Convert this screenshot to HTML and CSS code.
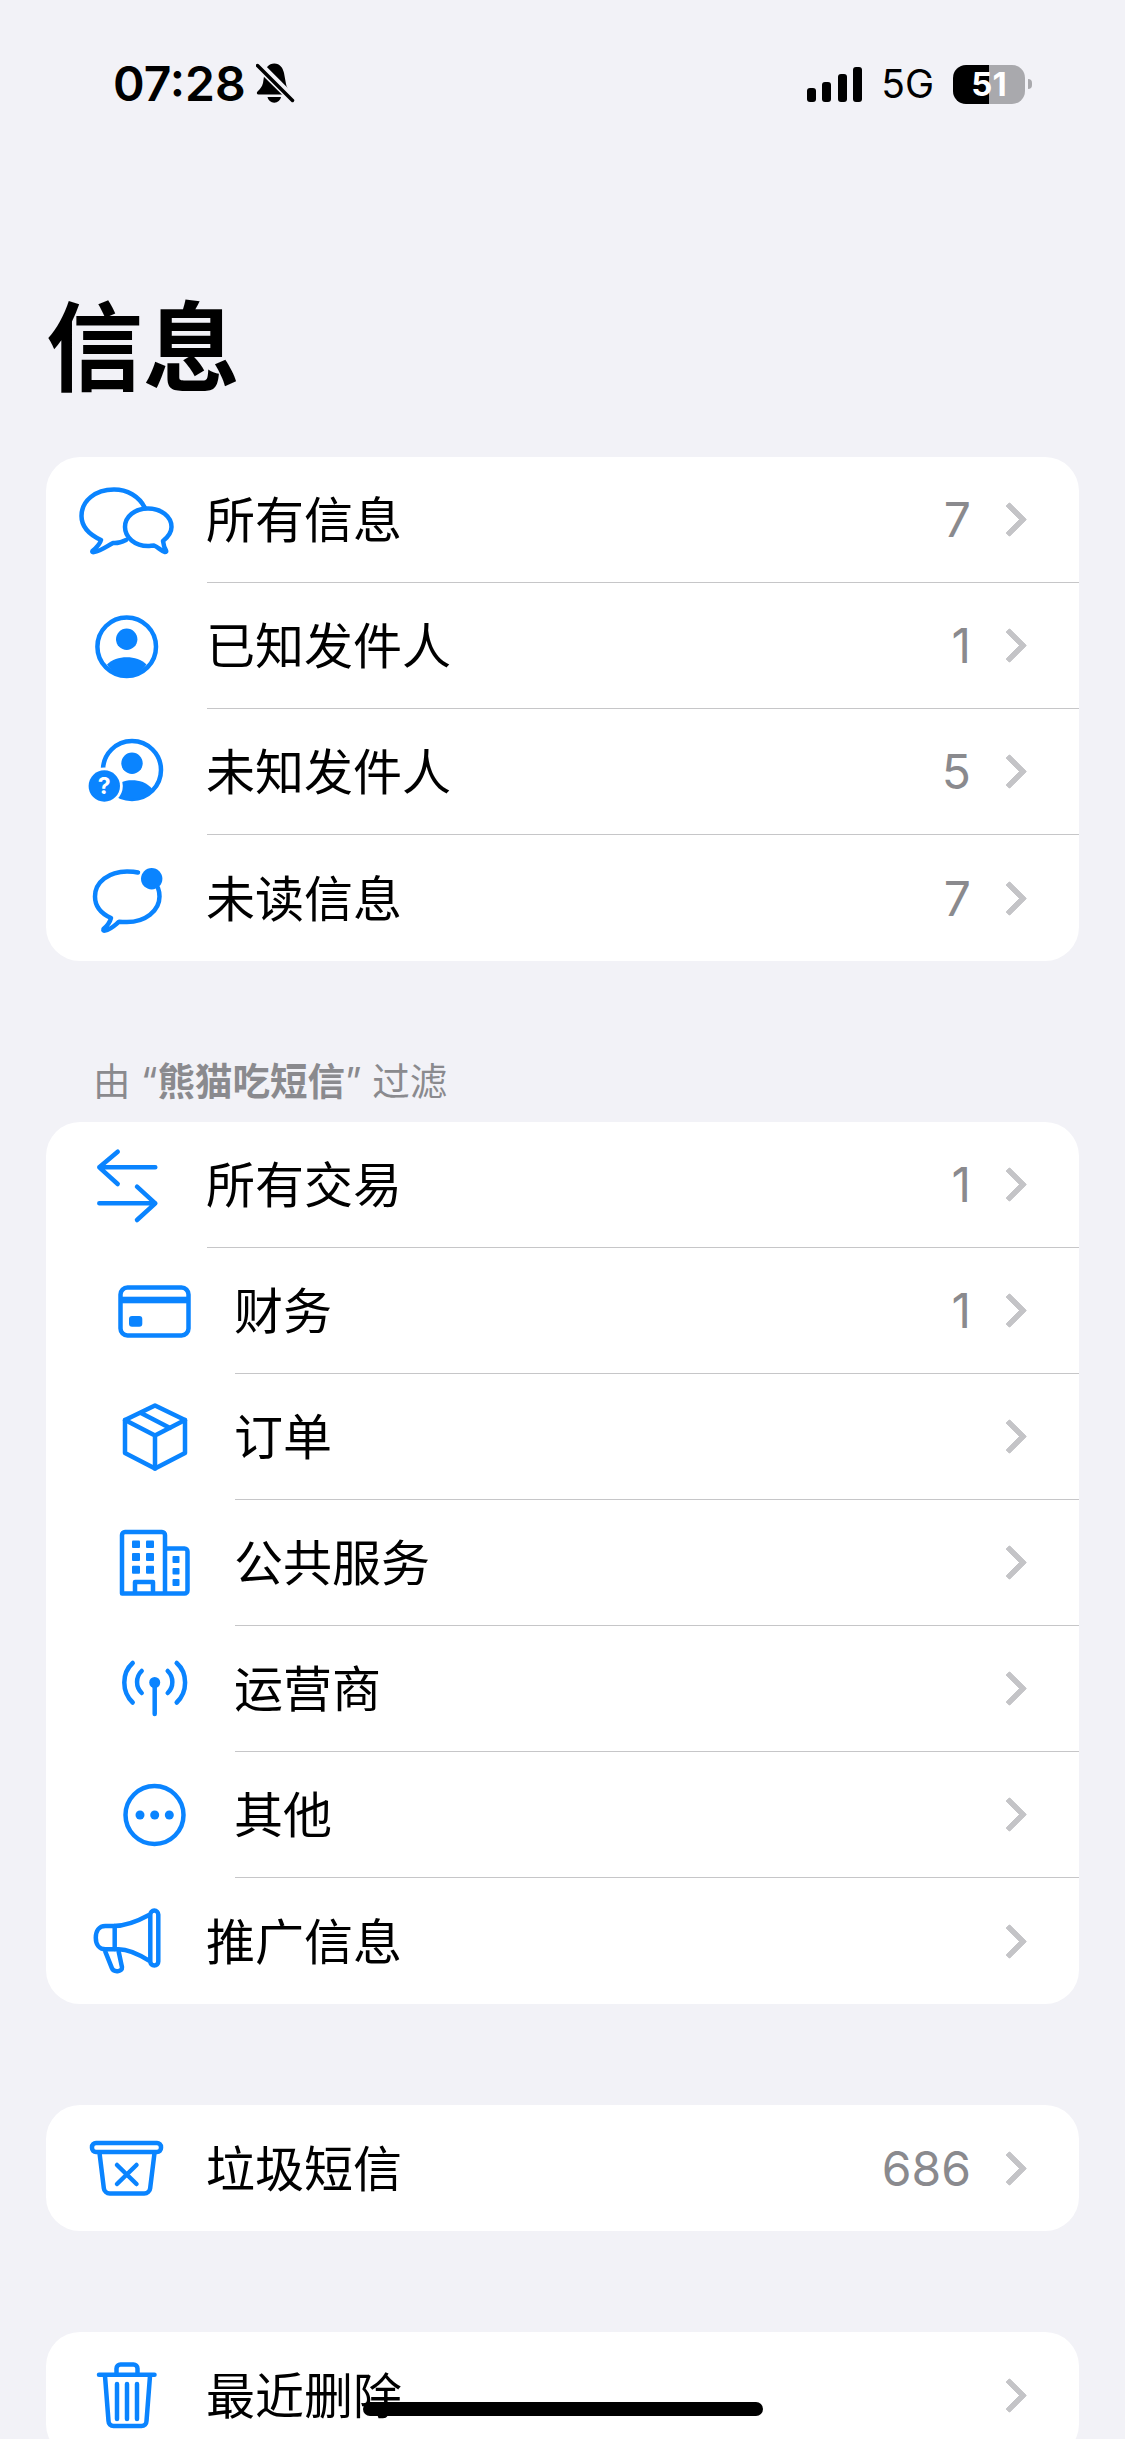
FILE: index.html
```html
<!DOCTYPE html>
<html lang="zh-CN">
<head>
    <meta charset="UTF-8">
    <meta name="viewport" content="width=device-width, initial-scale=1.0">
    <title>信息</title>
    <link rel="stylesheet" href="styles.css">
</head>
<body>

<div class="statusBar">
    <div class="statusLeft">
        <span class="time">07:28</span>
        <svg class="bell" width="40" height="44" viewBox="0 0 40 44">
            <path d="M18.3 1.5C24 1.5 27 6 28 11L30 22C30.5 26 33 28 35 30C36 31.5 35.5 32.5 34 32.5H2.5C.8 32.5.3 31 1.5 29.5C4 27 6 25 7 21L8.5 11C9.5 6 12.5 1.5 18.3 1.5Z" fill="#000"/>
            <path d="M11.5 35A6.8 6.5 0 0 0 25 35Z" fill="#000"/>
            <path d="M3 0L39 36" stroke="#f2f2f7" stroke-width="4"/>
            <path d="M1.5 3.5L36.500 38" stroke="#f2f2f7" stroke-width="7"/>
            <path d="M1.500 3.500L36.500 38.500" stroke="#000" stroke-width="3.500" stroke-linecap="round"/>
        </svg>
    </div>
    <div class="statusRight">
        <div class="signal">
            <span class="bar bar1"></span>
            <span class="bar bar2"></span>
            <span class="bar bar3"></span>
            <span class="bar bar4"></span>
        </div>
        <span class="network">5G</span>
        <div class="battery"><span>51</span></div>
        <span class="batteryTip"></span>
    </div>
</div>

<h1 class="pageTitle">信息</h1>

<div class="card">
    <div class="row">
        <div class="rowIcon">
            <svg class="icon" width="120" height="100" viewBox="0 0 120 100">
                <path d="M78 38C72 26 60 19.500 47 19.500C28 19.500 14.500 31 14.500 46C14.500 56 21 64 34 70C33 74 29 78 25.500 81C25 82 26 82.500 27 82C34 81 40 76 46 73C50 73.500 55 72 59 70"/>
                <path d="M81 38.500C68 38.500 58 46.500 58 57C58 67.500 68 76 81 76C83 76 85 75.500 87 75.500C91 77 94 81 98 82C99 82 99.500 81.500 99 80.500C97.500 78 96.500 75 96 71C101 67 104.500 62.500 104.500 57C104.500 46.500 94 38.500 81 38.500Z"/>
            </svg>
        </div>
        <div class="rowBody"><span class="rowLabel">所有信息</span><span class="rowCount">7</span><span class="chevron"></span></div>
    </div>
    <div class="row">
        <div class="rowIcon">
            <svg class="icon" width="120" height="100" viewBox="0 0 120 100">
                <circle cx="59.700" cy="50.700" r="29.300"/>
                <circle class="solid" cx="59.700" cy="43.300" r="10.700"/>
                <path class="solid" d="M40 68.500C45 63.500 52 61.300 59.700 61.300C67.500 61.300 74.500 63.500 79.500 68.500C74 76 67 80 59.700 80C52 80 45 76 40 68.500Z"/>
            </svg>
        </div>
        <div class="rowBody"><span class="rowLabel">已知发件人</span><span class="rowCount">1</span><span class="chevron"></span></div>
    </div>
    <div class="row">
        <div class="rowIcon">
            <svg class="icon" width="120" height="100" viewBox="0 0 120 100">
                <circle cx="65" cy="48" r="29"/>
                <circle class="solid" cx="65" cy="41.300" r="10.700"/>
                <path class="solid" d="M45.500 69C50 60.500 57 58.300 65 58.300C72.500 58.300 79.500 60.500 85 66.500C79 73.500 72 77 65 77C57 77 50 74 45.500 69Z"/>
                <circle class="knockout" cx="37.300" cy="64" r="18.500"/>
                <circle class="solid" cx="37.300" cy="64" r="15.700"/>
                <text class="badgeMark" x="37.300" y="72">?</text>
            </svg>
        </div>
        <div class="rowBody"><span class="rowLabel">未知发件人</span><span class="rowCount">5</span><span class="chevron"></span></div>
    </div>
    <div class="row">
        <div class="rowIcon">
            <svg class="icon" width="120" height="100" viewBox="0 0 120 100">
                <path d="M71 24.500C67 23.500 64 23.500 60 23.500C42 23.500 28 34 28 48.500C28 58 34 65.500 44 70C43 74 40 78 36.500 81C36 82.500 37 83 38 82.500C44 81.500 48 77 52 73.800C55 74 57.500 74 60 74C78 74 92.500 63 92.500 48.500C92.500 45 92 42.500 91 40"/>
                <circle class="solid" cx="84.700" cy="30.700" r="10.700"/>
            </svg>
        </div>
        <div class="rowBody"><span class="rowLabel">未读信息</span><span class="rowCount">7</span><span class="chevron"></span></div>
    </div>
</div>

<div class="sectionHeader">由 “<b>熊猫吃短信</b>” 过滤</div>

<div class="card">
    <div class="row">
        <div class="rowIcon">
            <svg class="icon" width="120" height="100" viewBox="0 0 120 100">
                <path d="M88.300 32.300H32.300M50.700 16.700L32.300 32.300L50.700 49"/>
                <path d="M32.300 68.300H88.300M70 51.700L88.300 68.300L70 85"/>
            </svg>
        </div>
        <div class="rowBody"><span class="rowLabel">所有交易</span><span class="rowCount">1</span><span class="chevron"></span></div>
    </div>
    <div class="row sub">
        <div class="rowIcon">
            <svg class="icon" width="120" height="100" viewBox="0 0 120 100">
                <rect x="25.500" y="26.500" width="68" height="48" rx="7"/>
                <rect class="solid" x="25.500" y="35.700" width="68" height="6.600"/>
                <rect class="solid" x="34" y="55" width="13.300" height="10.700" rx="3"/>
            </svg>
        </div>
        <div class="rowBody"><span class="rowLabel">财务</span><span class="rowCount">1</span><span class="chevron"></span></div>
    </div>
    <div class="row sub">
        <div class="rowIcon">
            <svg class="icon" width="120" height="100" viewBox="0 0 120 100">
                <path d="M60 18.500L90 33V66L60 81.500L30 66V33Z"/>
                <path d="M30 33L60 48.500L90 33M60 48.500V81.500M46 26L75 41"/>
            </svg>
        </div>
        <div class="rowBody"><span class="rowLabel">订单</span><span class="chevron"></span></div>
    </div>
    <div class="row sub">
        <div class="rowIcon">
            <svg class="icon" width="120" height="100" viewBox="0 0 120 100">
                <path d="M27 80.500V22A3 3 0 0 1 30 19H67A3 3 0 0 1 70 22V80.500ZM70 35.500H89.500A3 3 0 0 1 92.500 38.500V77.500A3 3 0 0 1 89.500 80.500H70M40 80.500V69H58V80.500"/>
                <rect class="solid" x="37" y="27.500" width="8" height="7.500" rx="1"/>
                <rect class="solid" x="51" y="27.500" width="8" height="7.500" rx="1"/>
                <rect class="solid" x="37" y="40" width="8" height="8" rx="1"/>
                <rect class="solid" x="51" y="40" width="8" height="8" rx="1"/>
                <rect class="solid" x="37" y="52.700" width="8" height="8" rx="1"/>
                <rect class="solid" x="51" y="52.700" width="8" height="8" rx="1"/>
                <rect class="solid" x="77.500" y="43" width="7" height="7" rx="1"/>
                <rect class="solid" x="77.500" y="55" width="7" height="6.500" rx="1"/>
                <rect class="solid" x="77.500" y="66" width="7" height="7" rx="1"/>
            </svg>
        </div>
        <div class="rowBody"><span class="rowLabel">公共服务</span><span class="chevron"></span></div>
    </div>
    <div class="row sub">
        <div class="rowIcon">
            <svg class="icon" width="120" height="100" viewBox="0 0 120 100">
                <circle class="solid" cx="59.700" cy="43.500" r="5.500"/>
                <path d="M59.700 43.500V75"/>
                <path d="M46.700 32C40.500 38 40.500 48 46.700 54M72.700 32C78.900 38 78.900 48 72.700 54"/>
                <path d="M37.700 24C26.500 34 26.500 53 37.700 63.500M81.700 24C92.900 34 92.900 53 81.700 63.500"/>
            </svg>
        </div>
        <div class="rowBody"><span class="rowLabel">运营商</span><span class="chevron"></span></div>
    </div>
    <div class="row sub">
        <div class="rowIcon">
            <svg class="icon" width="120" height="100" viewBox="0 0 120 100">
                <circle cx="59.500" cy="50" r="29"/>
                <circle class="solid" cx="45" cy="50" r="4.500"/>
                <circle class="solid" cx="59.700" cy="50" r="4.500"/>
                <circle class="solid" cx="74.300" cy="50" r="4.500"/>
            </svg>
        </div>
        <div class="rowBody"><span class="rowLabel">其他</span><span class="chevron"></span></div>
    </div>
    <div class="row">
        <div class="rowIcon">
            <svg class="icon" width="120" height="100" viewBox="0 0 120 100">
                <rect x="83.300" y="19.600" width="8" height="55" rx="4"/>
                <path d="M82 24C71 30 58 35 46.700 35H38.300C32 35 28.800 40 28.800 46.700C28.800 53.300 32 58.300 38.300 58.300H51.700C62 58.300 72 63.500 82 69.700"/>
                <path d="M47.700 35V58M38.300 60.700L45 77.300C46.500 81.500 55.500 81 55 76.300L51.700 60.700"/>
            </svg>
        </div>
        <div class="rowBody"><span class="rowLabel">推广信息</span><span class="chevron"></span></div>
    </div>
</div>

<div class="card spaced">
    <div class="row">
        <div class="rowIcon">
            <svg class="icon" width="120" height="100" viewBox="0 0 120 100">
                <rect x="25" y="25" width="69" height="9" rx="4"/>
                <path d="M32.500 35L36.800 70A6 6 0 0 0 42.800 75.500H77.200A6 6 0 0 0 83.200 70L87.500 35"/>
                <path d="M50 47L69.500 66M69.500 47L50 66"/>
            </svg>
        </div>
        <div class="rowBody"><span class="rowLabel">垃圾短信</span><span class="rowCount">686</span><span class="chevron"></span></div>
    </div>
</div>

<div class="card spaced">
    <div class="row">
        <div class="rowIcon">
            <svg class="icon" width="120" height="100" viewBox="0 0 120 100">
                <path d="M49.500 29V23.500A4 4 0 0 1 53.500 19.500H66.500A4 4 0 0 1 70.500 23.500V29"/>
                <path d="M32 29.700H87.500"/>
                <path d="M38 31L41.500 76A5 5 0 0 0 46.500 81H74.500A5 5 0 0 0 79.500 76L83 31"/>
                <path d="M50 39V74M60 39V74M70 39V74"/>
            </svg>
        </div>
        <div class="rowBody"><span class="rowLabel">最近删除</span><span class="chevron"></span></div>
    </div>
</div>

<div class="homeIndicator"></div>

</body>
</html>
```

FILE: styles.css
```css
html, body {
  margin: 0;
  padding: 0;
  width: 1125px;
  height: 2439px;
  overflow: hidden;
}

body {
  position: relative;
  background-color: #f2f2f7;
  font-family: "Noto Sans CJK SC", Inter, sans-serif;
  color: #000;
}

.statusBar {
  display: flex;
  justify-content: space-between;
  align-items: center;
  height: 44px;
  padding: 62px 93px 0 113px;
}

.statusLeft {
  display: flex;
  align-items: center;
  gap: 10px;
}

.time {
  font-family: Inter, sans-serif;
  font-size: 48px;
  font-weight: 600;
  line-height: 44px;
}

.bell {
  display: block;
  flex: none;
}

.statusRight {
  display: flex;
  align-items: center;
}

.signal {
  display: flex;
  align-items: flex-end;
  gap: 6.5px;
  height: 35px;
  margin-right: 19px;
}

.bar {
  width: 9px;
  background-color: #000;
  border-radius: 3px;
}

.bar1 { height: 14px; }
.bar2 { height: 20px; }
.bar3 { height: 28px; }
.bar4 { height: 35px; }

.network {
  font-family: Inter, sans-serif;
  font-size: 39px;
  font-weight: 400;
  line-height: 44px;
  margin-right: 19px;
}

.battery {
  width: 72px;
  height: 39px;
  border-radius: 13px;
  background: linear-gradient(to right, #000 50%, #a9a9ad 50%);
  display: flex;
  justify-content: center;
  align-items: center;
  color: #fff;
  font-family: Inter, sans-serif;
  font-size: 33px;
  font-weight: 700;
}

.batteryTip {
  width: 4px;
  height: 10px;
  margin-left: 3px;
  background-color: #a9a9ad;
  border-radius: 0 4px 4px 0;
}

.pageTitle {
  margin: 0;
  box-sizing: border-box;
  height: 351px;
  padding: 161px 0 0 46px;
  font-size: 97px;
  font-weight: 700;
  line-height: 147px;
}

.card {
  margin: 0 46px;
  background-color: #fff;
  border-radius: 34px;
  overflow: hidden;
}

.card.spaced {
  margin-top: 101px;
}

.sectionHeader {
  padding: 96px 0 15px 93px;
  font-family: Inter, "Noto Sans CJK SC", sans-serif;
  font-size: 37.5px;
  line-height: 50px;
  color: #8a8a8e;
}

.sectionHeader b {
  font-weight: 700;
}

.row {
  display: flex;
  height: 126px;
}

.row.sub {
  padding-left: 28px;
}

.rowIcon {
  flex: none;
  width: 161px;
  display: flex;
  justify-content: center;
  align-items: center;
}

.icon {
  display: block;
  fill: none;
  stroke: #0a84ff;
  stroke-width: 4.5;
  stroke-linecap: round;
  stroke-linejoin: round;
}

.icon .solid {
  fill: #0a84ff;
  stroke: none;
}

.icon .knockout {
  fill: #fff;
  stroke: none;
}

.icon .badgeMark {
  fill: #fff;
  stroke: none;
  font-family: Inter, sans-serif;
  font-size: 23px;
  font-weight: 700;
  text-anchor: middle;
}

.rowBody {
  flex: 1;
  display: flex;
  align-items: center;
  padding-right: 54px;
  border-bottom: 1.5px solid #c6c6c8;
}

.row:last-child .rowBody {
  border-bottom: none;
}

.rowLabel {
  flex: 1;
  margin-left: -1px;
  padding-bottom: 5px;
  font-size: 49px;
  line-height: 60px;
}

.rowCount {
  font-family: Inter, sans-serif;
  font-size: 48px;
  color: #8a8a8e;
  margin-right: 29px;
}

.chevron {
  flex: none;
  width: 25px;
  height: 25px;
  box-sizing: border-box;
  border-top: 6px solid #c4c4c7;
  border-right: 6px solid #c4c4c7;
  border-radius: 2px;
  transform: translateX(-3px) rotate(45deg);
}

.homeIndicator {
  position: absolute;
  left: 363px;
  top: 2402px;
  width: 400px;
  height: 14px;
  border-radius: 7px;
  background-color: #000;
}
```
